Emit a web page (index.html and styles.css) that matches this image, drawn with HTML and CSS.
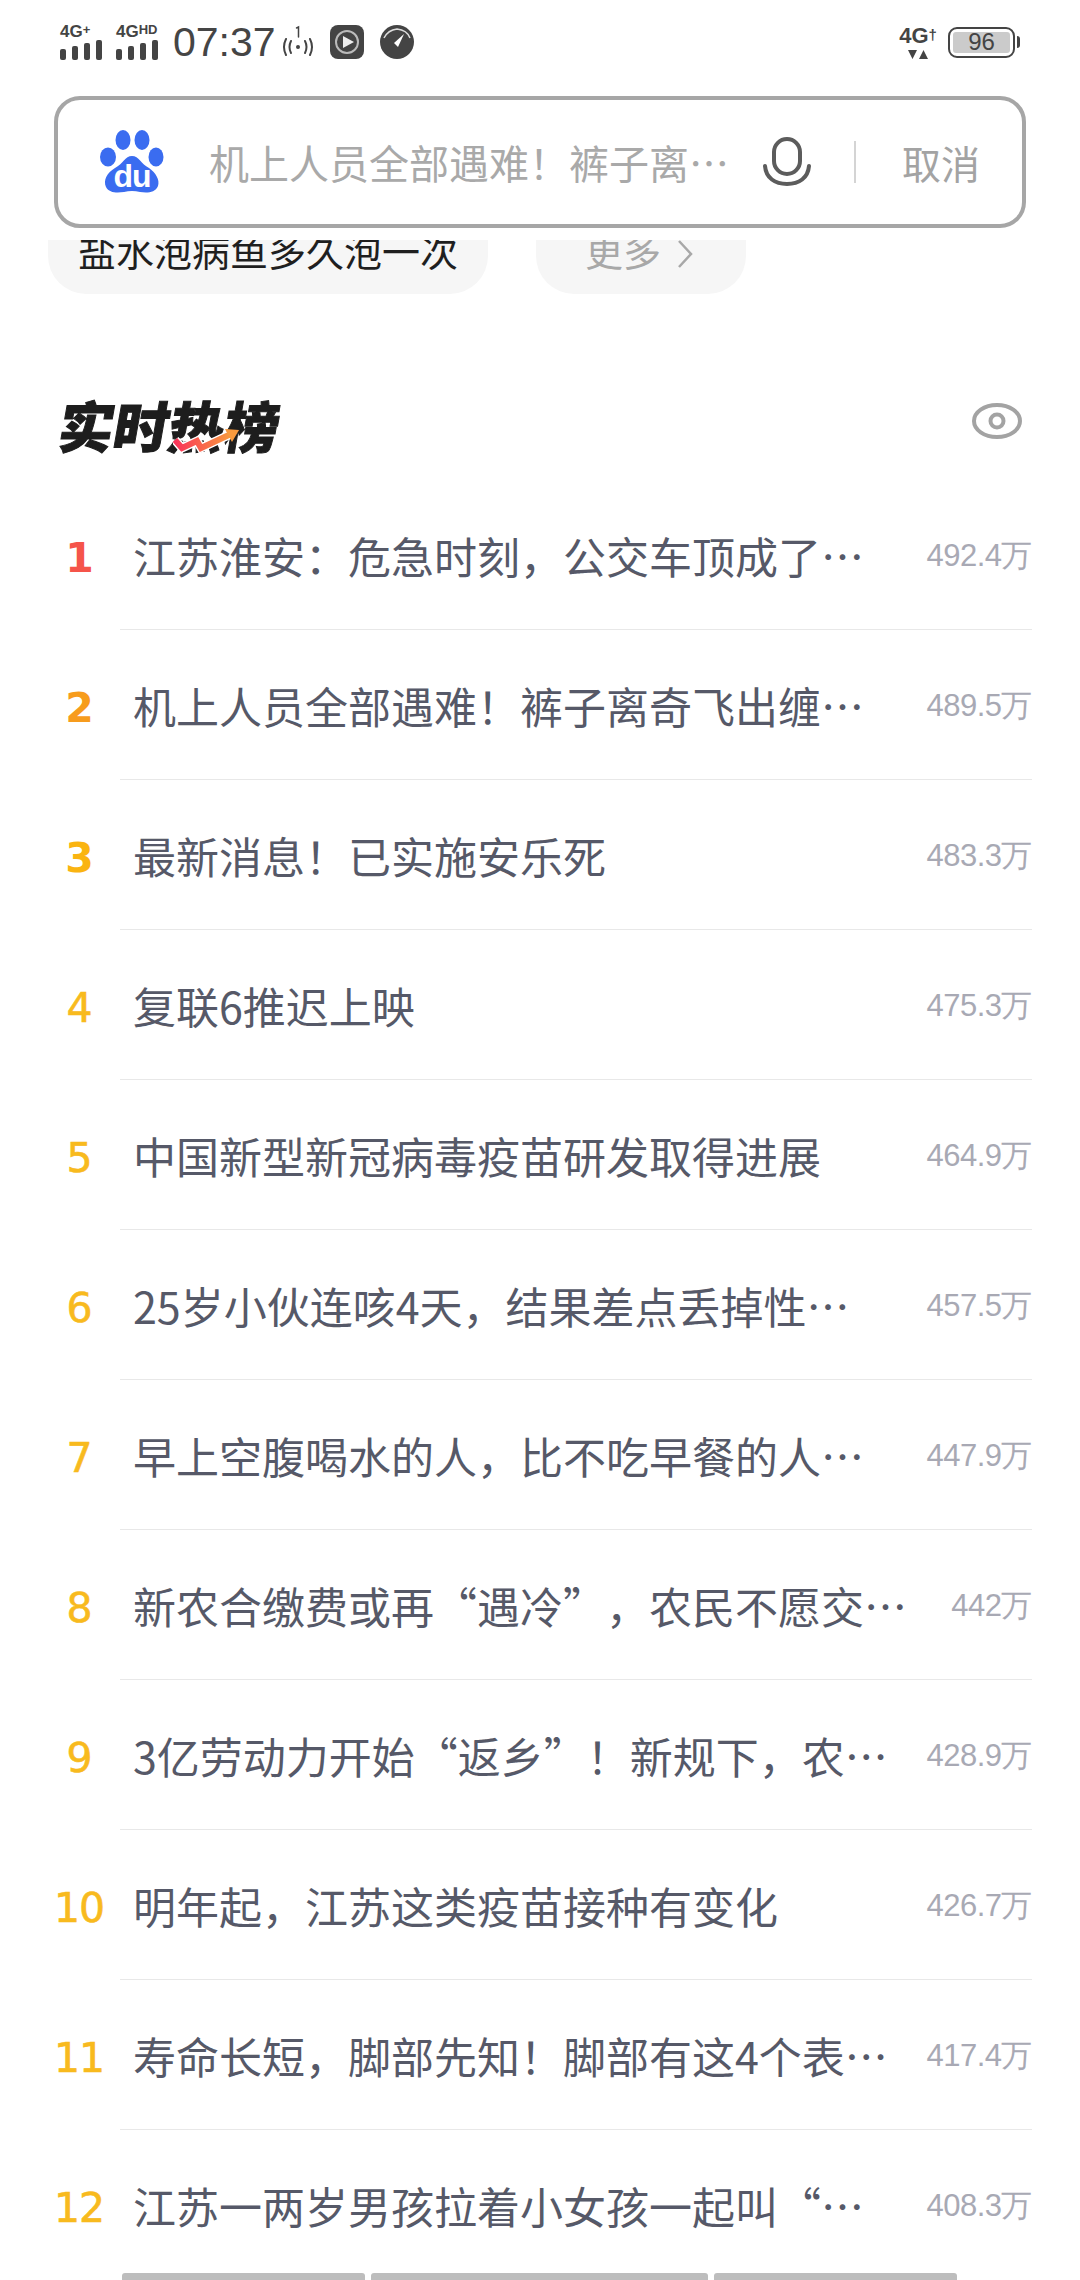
FILE: index.html
```html
<!DOCTYPE html>
<html lang="zh">
<head>
<meta charset="utf-8">
<title>实时热榜</title>
<link rel="stylesheet" href="styles.css">
</head>
<body>
<div class="phone">
  <header class="status">
    <div class="status-left">
      <div class="signal">
        <span class="net">4G<sup>+</sup></span>
        <svg class="bars" viewBox="0 0 42 20"><rect x="0" y="9" width="6" height="11" rx="2"/><rect x="12" y="6" width="6" height="14" rx="2"/><rect x="24" y="3" width="6" height="17" rx="2"/><rect x="36" y="0" width="6" height="20" rx="2"/></svg>
      </div>
      <div class="signal signal-b">
        <span class="net">4G<sup>HD</sup></span>
        <svg class="bars" viewBox="0 0 42 20"><rect x="0" y="9" width="6" height="11" rx="2"/><rect x="12" y="6" width="6" height="14" rx="2"/><rect x="24" y="3" width="6" height="17" rx="2"/><rect x="36" y="0" width="6" height="20" rx="2"/></svg>
      </div>
      <span class="time">07:37</span>
      <svg class="hotspot" viewBox="0 0 34 34" fill="none" stroke="#444" stroke-width="2" stroke-linecap="round"><path d="M5 14Q1 22 5 30"/><path d="M10 16Q7 22 10 28"/><path d="M24 16Q27 22 24 28"/><path d="M29 14Q33 22 29 30"/><circle cx="17" cy="22" r="2" fill="#444" stroke="none"/><path d="M15.500 3l2-1v10" stroke-width="1.500"/></svg>
      <svg class="app" viewBox="0 0 34 34"><rect width="34" height="34" rx="8" fill="#444"/><circle cx="17" cy="17" r="11" fill="none" stroke="#bbb" stroke-width="2"/><path d="M13 11l11 6-11 6z" fill="#eee"/></svg>
      <svg class="app app-gauge" viewBox="0 0 34 34"><circle cx="17" cy="17" r="17" fill="#444"/><path d="M4 13Q8 5 17 4Q27 5 30 13" fill="none" stroke="#ddd" stroke-width="1.500"/><path d="M24 9L14 18l4 4z" fill="#fff"/></svg>
    </div>
    <div class="status-right">
      <div class="net-right">
        <span class="net net-big">4G<sup>†</sup></span>
        <svg class="arrows" viewBox="0 0 20 10"><path d="M0 1h9L4.500 10zM11 10h9L15.500 1z" fill="#444"/></svg>
      </div>
      <div class="battery"><span class="battery-level">96</span></div>
    </div>
  </header>

  <div class="search">
    <svg class="logo" viewBox="0 0 64 64">
      <g fill="#3A6CF0">
        <ellipse cx="8" cy="27" rx="8" ry="9.500"/>
        <ellipse cx="23" cy="10" rx="7.500" ry="10"/>
        <ellipse cx="42" cy="10" rx="7.500" ry="10"/>
        <ellipse cx="56" cy="27" rx="7.500" ry="9.500"/>
        <path d="M32 26C25 26 23 34 15 38C7 43 3 50 6 57C9 63 17 63 24 62Q32 60 40 62C47 63 55 63 58 56C60 50 56 43 49 38C41 34 39 26 32 26Z"/>
      </g>
      <text x="32" y="57" class="logo-du">du</text>
    </svg>
    <span class="query">机上人员全部遇难！裤子离⋯</span>
    <svg class="mic" viewBox="0 0 48 50" fill="none" stroke="#5c5c5c" stroke-width="4" stroke-linecap="round"><rect x="11" y="2" width="26" height="35" rx="13"/><path d="M2 29C3 41 12 47 24 47S45 41 46 29"/></svg>
    <span class="divider"></span>
    <span class="cancel">取消</span>
  </div>

  <div class="chips">
    <div class="chip chip-main"><span class="chip-text">盐水泡病鱼多久泡一次</span></div>
    <div class="chip chip-more"><span class="chip-text">更多</span>
      <svg class="chev" viewBox="0 0 16 30" fill="none" stroke="#a8a8a8" stroke-width="2.500"><path d="M2 2l12 13L2 28"/></svg>
    </div>
  </div>

  <div class="hot-head">
    <div class="hot-title">
      <span class="hot-text">实时热榜</span>
      <svg class="spark" viewBox="0 0 66 26" fill="none" stroke-width="6" stroke-linejoin="miter">
        <defs><linearGradient id="g" x1="0" x2="1"><stop offset="0" stop-color="#F9345A"/><stop offset="1" stop-color="#F99A3D"/></linearGradient></defs>
        <path d="M2 12L9 20L24 13L28 20L58 6" stroke="#fff" stroke-width="9"/>
        <path d="M2 12L9 20L24 13L28 20L58 6" stroke="url(#g)"/>
        <path d="M52 1L66 2L59 14z" fill="#F99A3D" stroke="none"/>
      </svg>
    </div>
    <svg class="eye" viewBox="0 0 50 36" fill="none" stroke="#a3a3a3" stroke-width="4"><ellipse cx="25" cy="18" rx="23" ry="16"/><circle cx="25" cy="18" r="6.500"/></svg>
  </div>

  <ol class="list">
    <li class="row"><span class="rank r1">1</span><div class="body"><span class="title">江苏淮安：危急时刻，公交车顶成了⋯</span><span class="count">492.4万</span></div></li>
    <li class="row"><span class="rank r2">2</span><div class="body"><span class="title">机上人员全部遇难！裤子离奇飞出缠⋯</span><span class="count">489.5万</span></div></li>
    <li class="row"><span class="rank r3">3</span><div class="body"><span class="title">最新消息！已实施安乐死</span><span class="count">483.3万</span></div></li>
    <li class="row"><span class="rank">4</span><div class="body"><span class="title">复联6推迟上映</span><span class="count">475.3万</span></div></li>
    <li class="row"><span class="rank">5</span><div class="body"><span class="title">中国新型新冠病毒疫苗研发取得进展</span><span class="count">464.9万</span></div></li>
    <li class="row"><span class="rank">6</span><div class="body"><span class="title">25岁小伙连咳4天，结果差点丢掉性⋯</span><span class="count">457.5万</span></div></li>
    <li class="row"><span class="rank">7</span><div class="body"><span class="title">早上空腹喝水的人，比不吃早餐的人⋯</span><span class="count">447.9万</span></div></li>
    <li class="row"><span class="rank">8</span><div class="body"><span class="title">新农合缴费或再“遇冷”，农民不愿交⋯</span><span class="count">442万</span></div></li>
    <li class="row"><span class="rank">9</span><div class="body"><span class="title">3亿劳动力开始“返乡”！新规下，农⋯</span><span class="count">428.9万</span></div></li>
    <li class="row"><span class="rank">10</span><div class="body"><span class="title">明年起，江苏这类疫苗接种有变化</span><span class="count">426.7万</span></div></li>
    <li class="row"><span class="rank">11</span><div class="body"><span class="title">寿命长短，脚部先知！脚部有这4个表⋯</span><span class="count">417.4万</span></div></li>
    <li class="row"><span class="rank">12</span><div class="body"><span class="title">江苏一两岁男孩拉着小女孩一起叫“⋯</span><span class="count">408.3万</span></div></li>
  </ol>

  <div class="tabs">
    <span class="tab tab-a"></span><span class="tab tab-b"></span><span class="tab tab-c"></span>
  </div>
</div>
</body>
</html>
```
FILE: styles.css
```css
* { box-sizing: border-box; }
html, body { margin: 0; padding: 0; background: #fff; }
body { font-family: "Noto Sans CJK SC", "Liberation Sans", sans-serif; }
.phone { position: relative; width: 1080px; height: 2280px; overflow: hidden; display: flex; flex-direction: column; }

.status { flex: none; height: 96px; padding: 22px 60px 0 60px; display: flex; justify-content: space-between; align-items: flex-start; color: #444; font-family: "Liberation Sans", sans-serif; }
.status-left { display: flex; align-items: center; height: 40px; }
.status-right { display: flex; align-items: center; height: 40px; }
.signal { display: flex; flex-direction: column; width: 42px; }
.signal-b { margin-left: 14px; }
.net { font-size: 17px; font-weight: 700; line-height: 15px; white-space: nowrap; }
.net sup { font-size: 13px; line-height: 0; vertical-align: 3px; }
.bars { width: 42px; height: 20px; fill: #444; margin-top: 1px; }
.time { font-size: 41px; line-height: 40px; margin-left: 15px; color: #454545; }
.hotspot { width: 34px; height: 34px; margin-left: 5px; }
.app { width: 34px; height: 34px; margin-left: 15px; }
.app-gauge { margin-left: 16px; }
.net-right { display: flex; flex-direction: column; align-items: center; width: 36px; }
.net-big { font-size: 22px; line-height: 21px; }
.net-big sup { font-size: 15px; vertical-align: 3px; }
.arrows { width: 20px; height: 10px; margin-top: 3px; }
.battery { position: relative; width: 67px; height: 31px; margin: 0 5px 0 12px; border: 2.500px solid #444; border-radius: 9px; padding: 3px; }
.battery::after { content: ""; position: absolute; right: -7px; top: 7px; width: 3px; height: 12px; background: #444; border-radius: 0 3px 3px 0; }
.battery-level { display: block; height: 100%; width: 100%; background: #cbcbcb; border-radius: 3px; font-size: 24px; line-height: 20px; text-align: center; color: #444; }

.search { margin: 0 54px; height: 132px; flex: none; border: 4px solid #a6a6a6; border-radius: 26px; display: flex; align-items: center; padding-left: 42px; background: #fff; }
.logo { width: 64px; height: 64px; flex: none; }
.logo-du { font-family: "Liberation Sans", sans-serif; font-size: 32px; font-weight: 700; fill: #fff; text-anchor: middle; letter-spacing: -1px; }
.query { font-size: 40px; color: #a9a9a9; margin-left: 45px; width: 554px; flex: none; white-space: nowrap; line-height: 48px; }
.mic { width: 48px; height: 50px; flex: none; }
.divider { width: 2px; height: 42px; background: #d4d4d4; margin-left: 43px; flex: none; }
.cancel { font-size: 39px; color: #a3a3a3; margin-left: 46px; white-space: nowrap; }

.chips { margin-top: 12px; height: 54px; flex: none; display: flex; gap: 48px; padding-left: 48px; overflow: hidden; }
.chip { height: 54px; background: #f6f6f6; border-radius: 0 0 38px 38px; display: flex; align-items: flex-start; font-size: 38px; line-height: 44px; white-space: nowrap; }
.chip-text { margin-top: -12px; }
.chip-main { width: 440px; padding-left: 30px; color: #1f1f1f; }
.chip-more { width: 210px; padding-left: 49px; color: #a8a8a8; }
.chev { width: 16px; height: 30px; margin: -1px 0 0 16px; }

.hot-head { display: flex; justify-content: space-between; align-items: flex-start; height: 60px; margin-top: 100px; padding: 0 58px 0 60px; flex: none; }
.hot-title { position: relative; width: 222px; }
.hot-text { display: block; font-size: 55px; font-weight: 900; line-height: 60px; color: #1d1d1d; transform: skewX(-10deg); white-space: nowrap; -webkit-text-stroke: 1px #1d1d1d; }
.spark { position: absolute; left: 113px; top: 34px; width: 66px; height: 26px; }
.eye { width: 50px; height: 36px; margin-top: 9px; }

.list { list-style: none; margin: 26px 0 0; padding: 0; flex: none; }
.row { display: flex; height: 150px; align-items: stretch; }
.rank { width: 62px; margin: 0 10px 0 48px; flex: none; text-align: center; font-family: "DejaVu Sans", sans-serif; color: #F8BA1E; font-size: 41px; line-height: 157px; letter-spacing: -1px; white-space: nowrap; -webkit-text-stroke: 0.6px currentColor; }
.r1 { color: #F5544A; font-weight: 700; -webkit-text-stroke: 0; }
.r2 { color: #F79C1D; font-weight: 700; -webkit-text-stroke: 0; }
.r3 { color: #FAB411; font-weight: 700; -webkit-text-stroke: 0; }
.body { flex: 1; display: flex; justify-content: space-between; align-items: center; margin-right: 48px; border-bottom: 1px solid #e8e8e8; padding-left: 13px; }
.row:last-child .body { border-bottom: 0; }
.title { font-size: 43px; color: #565968; white-space: nowrap; line-height: 50px; text-spacing-trim: space-all; }
.count { font-size: 31px; color: #a8a9b4; white-space: nowrap; font-family: "Liberation Sans", sans-serif; letter-spacing: -0.500px; padding-top: 2px; }

.tabs { position: absolute; left: 122px; bottom: 0; display: flex; gap: 6px; height: 7px; }
.tab { height: 7px; background: #bdbdbd; border-radius: 3px 3px 0 0; }
.tab-a { width: 243px; }
.tab-b { width: 337px; }
.tab-c { width: 243px; }
```
